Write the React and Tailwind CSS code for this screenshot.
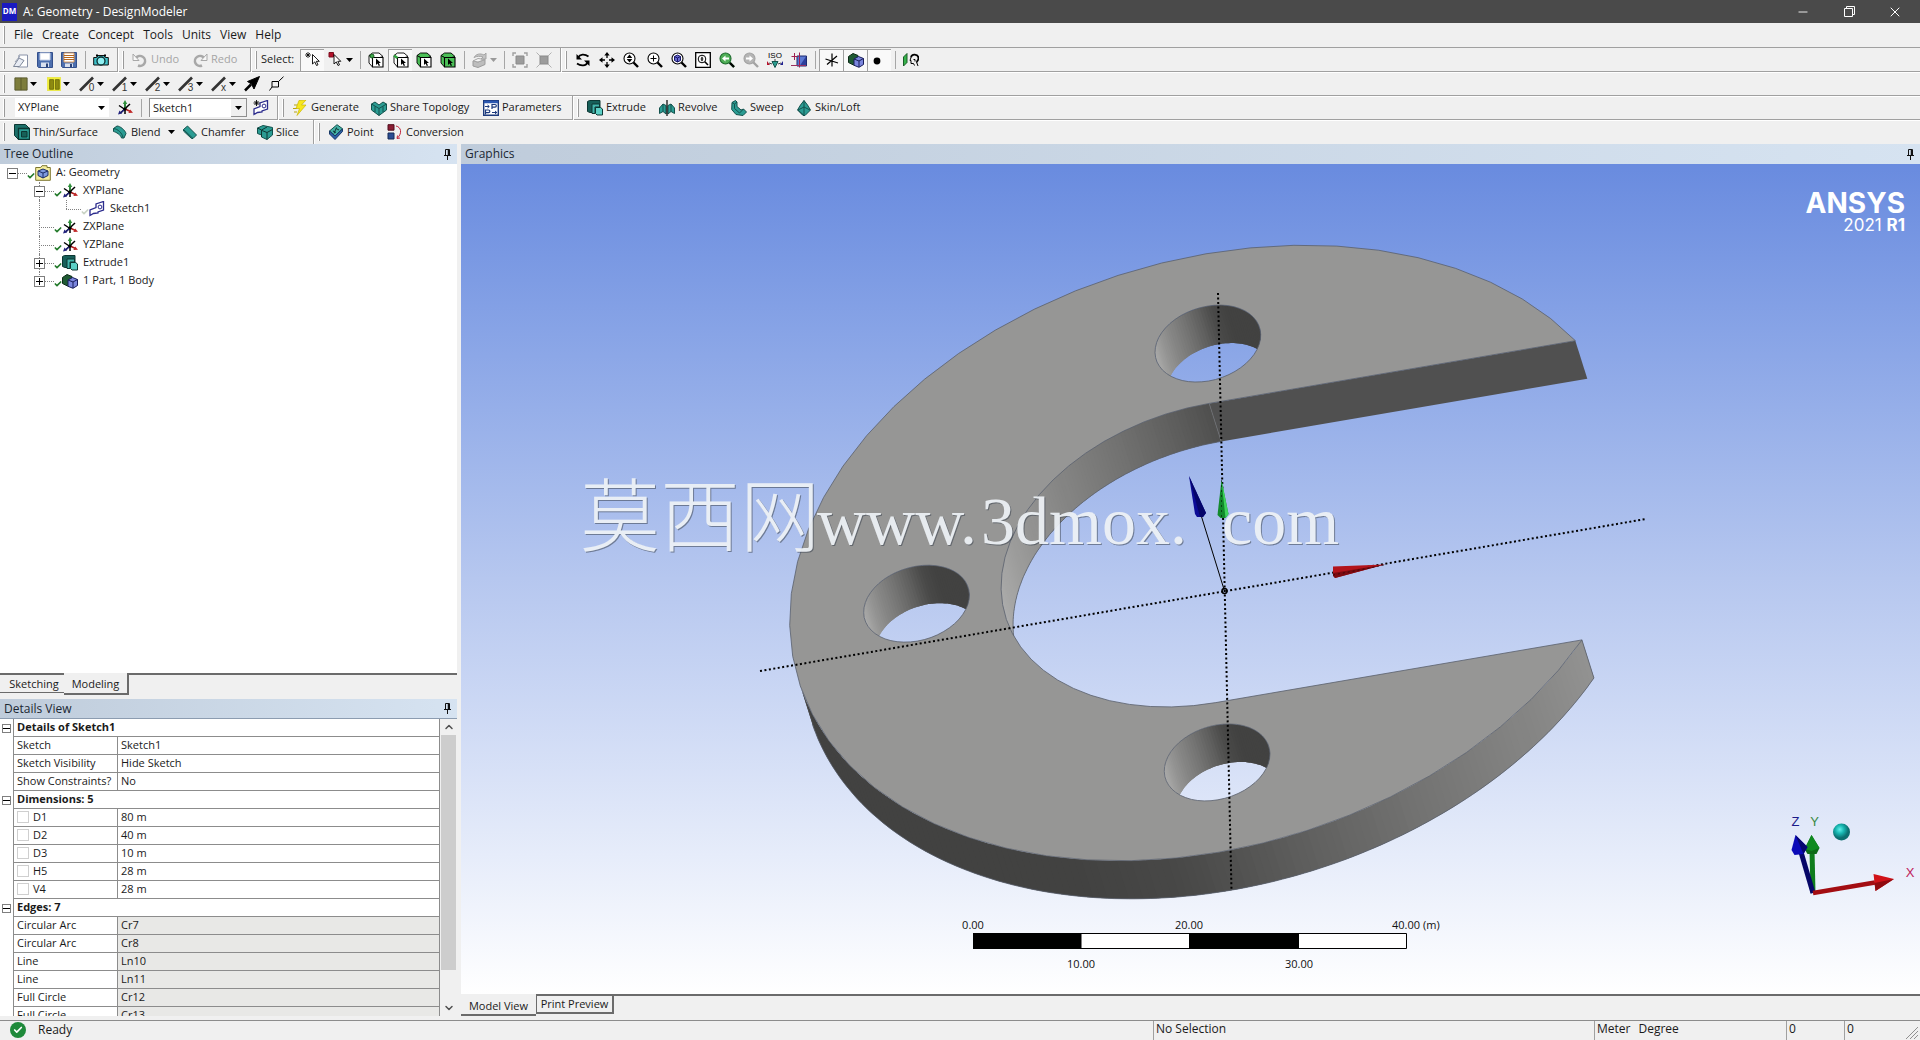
import { useState } from "react"
import { Check, ChevronDown, ChevronUp, Minus, X } from "lucide-react"

/* ---------- toolbar icons ---------- */

function Icon({ children, size = "size-4" }) {
  return (
    <svg viewBox="0 0 16 16" className={`${size} shrink-0`} fill="none" stroke="#000" strokeWidth="1" aria-hidden="true">
      {children}
    </svg>
  )
}

const NewIcon = () => (
  <Icon>
    <path d="M6 3h8.500v12h-10z" fill="#fff" stroke="#8a93a8" />
    <path d="M.5 14.500 6 6l5 2.500-4.500 6z" fill="#e8ecf4" stroke="#7d8799" />
    <path d="M2 10l5-6" stroke="#9aa3b5" />
  </Icon>
)
const SaveIcon = () => (
  <Icon>
    <path d="M.5.500h15v15h-14l-1-1z" fill="#4d6fae" stroke="#34508c" />
    <path d="M3 1h10v7H3z" fill="#fff" stroke="#c7d2e8" />
    <path d="M4 10.500h8V15H4z" fill="#d9e0ee" stroke="none" />
    <path d="M9 11.500h2V15H9z" fill="#2b4379" stroke="none" />
  </Icon>
)
const SaveAsIcon = () => (
  <Icon>
    <path d="M.5.500h15v15h-14l-1-1z" fill="#4d6fae" stroke="#34508c" />
    <path d="M3 1h10v9H3z" fill="#fff" stroke="#e0a060" />
    <path d="M3 3.500h10M3 5.500h10M3 7.500h10" stroke="#b5651d" />
    <path d="M4 11.500h8V15H4z" fill="#d9e0ee" stroke="none" />
    <path d="M9 12h2v3H9z" fill="#2b4379" stroke="none" />
  </Icon>
)
const CameraIcon = () => (
  <Icon>
    <path d="M.7 5.500h3l1-2h6.600l1 2h3v7.500H.7z" fill="#3fc1c9" stroke="#111" />
    <circle cx="8" cy="9" r="4" fill="#8ff0f2" stroke="#0a2a2c" strokeWidth="1.300" />
    <path d="M3 3.500h2M11 3.500h2" strokeWidth="2" />
  </Icon>
)
const UndoIcon = ({ flip }) => (
  <Icon>
    <g className={flip ? "[transform:scaleX(-1)] origin-center" : ""} stroke="#a8a8a8">
      <path d="M4 6a5 5 0 1 1 2 7.500" strokeWidth="2.500" />
      <path d="M1 2v6.500h6z" fill="#f8f8f8" />
    </g>
  </Icon>
)
const Pointer = ({ x = 6, y = 3 }) => (
  <path d={`M${x} ${y}v9.500l2.300-2.100 1.700 3.600 1.500-.7-1.700-3.500h3z`} fill="#fff" stroke="#000" strokeWidth=".9" />
)
const SelectIcon = () => (
  <Icon>
    <path d="M3 0v6M0 3h6M1 1l4 4M5 1 1 5" strokeWidth=".8" />
    <Pointer x={7.500} y={2.500} />
  </Icon>
)
const SelectModeIcon = () => (
  <Icon>
    <path d="M1 .500h4.500V5H1z" fill="#b3122b" stroke="#7c0d1e" />
    <Pointer x={6} y={2.500} />
  </Icon>
)
const CubeFilter = ({ front = "#fff", side = "#fff", dot, edge }) => (
  <Icon>
    <path d="M1 3.500 4.500 1H11l4 3.500-3 1H4z" fill={side} strokeWidth=".9" />
    <path d="M1 3.500v7.500l3.500 4V5.500z" fill={side} strokeWidth=".9" />
    <path d="M4.500 5.500H15v9.500H4.500z" fill={front} strokeWidth="1.100" />
    {dot && <circle cx="4" cy="4" r="2" fill="#3fae4b" stroke="#185a20" />}
    {edge && <path d="M1 3.500 4.500 6" stroke="#2fa33c" strokeWidth="2.500" />}
    <path d="M8 6.500v6.500l1.600-1.400 1.200 2.400 1.200-.5-1.200-2.400h2.200z" fill="#000" stroke="none" />
  </Icon>
)
const GreyBoxIcon = () => (
  <Icon>
    <path d="M1 9v5l5 1.500 7-3V7.500L6 10z" fill="#bdbdbd" stroke="#9b9b9b" />
    <path d="M1 9l5-2.500 7 1L6 10z" fill="#f4f4f4" stroke="#a5a5a5" />
    <path d="M2 5.500C4 2 8 1 12 3l2-2v6H9l2-2C8 4 5 4 2 5.500z" fill="#c4c4c4" stroke="#a5a5a5" />
  </Icon>
)
const ExpandIcon = ({ shrink }) => (
  <Icon>
    <path d="M4 4h8v8H4z" fill="#9c9c9c" stroke="#8a8a8a" />
    {shrink ? (
      <path d="M.5.500 4 4M15.500.500 12 4M.5 15.500 4 12M15.500 15.500 12 12" stroke="#b2b2b2" />
    ) : (
      <path d="M1 4V1h3M12 1h3v3M15 12v3h-3M4 15H1v-3" stroke="#a0a0a0" strokeWidth="1.400" />
    )}
  </Icon>
)
const RotateIcon = () => (
  <Icon>
    <path d="M3 5.500C5 2 9.500 1.500 13.500 4.500M13 10c-2 4-7 4.500-11 1.500" strokeWidth="1.700" />
    <path d="M1.500 2v5.500h5.500zM14.500 14V8.500H9z" fill="#000" stroke="none" />
  </Icon>
)
const PanIcon = () => (
  <Icon>
    <path d="M8 2v4M8 10v4M2 8h4M10 8h4" strokeWidth="1.300" />
    <path d="M8 0l2.700 3.500H5.300zM8 16l2.700-3.500H5.300zM0 8l3.500-2.700v5.400zM16 8l-3.500-2.700v5.400z" fill="#000" stroke="none" />
  </Icon>
)
const Lens = ({ c = "#000", fill = "#fff", children }) => (
  <Icon>
    <path d="M10.500 10.500 15 15" stroke={c} strokeWidth="2.400" />
    <circle cx="6.500" cy="6.500" r="5.500" fill={fill} stroke={c} strokeWidth="1.100" />
    {children}
  </Icon>
)
const ZoomIcon = () => (
  <Lens><path d="M6.500 2.500 9.300 6H3.700zM6.500 10.500 9.300 7H3.700z" fill="#000" stroke="none" /></Lens>
)
const ZoomInIcon = () => <Lens><path d="M6.500 3.500v6M3.500 6.500h6" /></Lens>
const ZoomBodyIcon = () => (
  <Lens>
    <path d="M6.500 3 9.500 4.500v4l-3 1.500-3-1.500v-4z" fill="#6a6ad0" stroke="#17176b" />
    <path d="M3.500 4.500l3 1.500 3-1.500M6.500 6v4" stroke="#17176b" />
  </Lens>
)
const ZoomFitIcon = () => (
  <Icon>
    <path d="M.7.700h14.600v14.600H.7z" fill="#fff" strokeWidth="1.300" />
    <circle cx="7" cy="7" r="3.800" />
    <path d="M7 4.500 8.500 6.700h-3zM7 9.500 8.500 7.300h-3z" fill="#000" stroke="none" />
    <path d="M9.800 9.800l3.200 3.200" strokeWidth="1.600" />
  </Icon>
)
const ZoomPrevIcon = () => (
  <Lens c="#1d6a2d" fill="#4fae56">
    <path d="M3 6.500l3.500-3V5.500H10v2H6.500v2z" fill="#fff" stroke="none" />
    <path d="M11 11l4 4" stroke="#000" strokeWidth="2.200" />
  </Lens>
)
const ZoomNextIcon = () => (
  <Lens c="#a3a3a3" fill="#b5b5b5"><path d="M10 6.500 6.500 3.500V5.500H3v2h3.500v2z" fill="#fff" stroke="none" /></Lens>
)
const IsoIcon = () => (
  <Icon>
    <text x="8" y="5.500" textAnchor="middle" fontSize="8" fontFamily="Liberation Sans, sans-serif" fill="#000" stroke="none">ISO</text>
    <path d="M8 7v3M2 11l3 1M14 11l-3 1" stroke="#444" />
    <path d="M5 9.500h6l-3 6z" fill="#2a9d8f" stroke="#14534c" />
    <path d="M0 9v4h3z" fill="#b3122b" stroke="none" /><path d="M16 9v4h-3z" fill="#22228f" stroke="none" />
  </Icon>
)
const LookAtIcon = () => (
  <Icon>
    <path d="M6 4h9.500v10H6z" fill="#5b78d2" stroke="#1c2a70" />
    <path d="M9 13.500l6-9v9z" fill="#2c3f9c" stroke="none" />
    <path d="M3.500 1v7M.5 4.500H7M8.500.500v15" stroke="#a02050" />
    <path d="M0 13.500h15" stroke="#9a3060" />
  </Icon>
)
const AxisToggleIcon = () => (
  <Icon>
    <path d="M8 1.500v13M1.500 7l12.500 4M13 4 3 12.500" strokeWidth="1.200" />
  </Icon>
)
const BodyIcon = ({ size }) => (
  <Icon size={size}>
    <path d="M.5 4.500 5 1.500l5 2v6L5.500 13l-5-2.500z" fill="#1f5a33" stroke="#0c2b17" />
    <path d="M6 7l4.500-2.500 5 2v6L11 15.300l-5-2z" fill="#7b86dd" stroke="#181d5a" />
    <path d="M6 7l5 2 4.500-2.500M11 9v6" stroke="#181d5a" />
  </Icon>
)
const DotIcon = () => <Icon><circle cx="5" cy="9" r="3.400" fill="#000" stroke="none" /></Icon>
const HeadIcon = () => (
  <Icon>
    <path d="M.5 5l3.500-3.500v9L.5 14z" fill="#35b24a" stroke="#1a5d27" />
    <path d="M8 5.500C8.500 1.500 15 1.500 15.500 6c.1 2-1 3-2 4" strokeWidth="1.800" />
    <path d="M8 5.500l-1 3h1v3h2.500l1 2M10.500 7.500h1.500v2M13.500 10l1.500 4" strokeWidth="1" />
  </Icon>
)

const PlaneOliveIcon = () => (
  <Icon size="size-[14px]">
    <path d="M1 1h14v14H1z" fill="#7d7d3c" stroke="#55552a" /><path d="M8 1v14" stroke="#55552a" />
  </Icon>
)
const PlaneYellowIcon = () => (
  <Icon size="size-[14px]">
    <path d="M0 0h16v16H0z" fill="#f1ee3a" stroke="#e3e36a" />
    <path d="M3 3h4.500v11H3zM9.500 3H14v11H9.500z" fill="#8d8a10" stroke="#6c6a0c" />
  </Icon>
)
const LineWidthIcon = ({ mark }) => (
  <Icon>
    <path d="M1 14.500 14 1.500" stroke="#333" strokeWidth="2.600" />
    <text x="12.500" y="15" textAnchor="middle" fontSize="10" fontFamily="Liberation Sans, sans-serif" fill="#333" stroke="none">{mark}</text>
  </Icon>
)
const ArrowBlackIcon = () => (
  <Icon><path d="M1 14.500 7 8.500" strokeWidth="2.500" /><path d="M15.500.500 3.500 5.500l4 2.500 2.500 5z" fill="#000" /></Icon>
)
const SquareLineIcon = () => (
  <Icon><path d="M1.500 14.500 4 11M4 5.500h6.500V11H4zM10.500 5.500 15.500.700" /></Icon>
)

const PlaneIcon = ({ size }) => (
  <Icon size={size}>
    <path d="M8 2.500V14M2 5.500l6 4M13 4 3.500 13" strokeWidth="1.500" />
    <path d="M8 9V2.500" stroke="#2f8f3b" strokeWidth="1.800" />
    <path d="M8 0l2.200 4H5.800z" fill="#2f8f3b" stroke="none" />
    <path d="M8 9l5 2.300" stroke="#b02020" strokeWidth="1.500" />
    <path d="M16 12.700l-4.600.3 1.800-3.500z" fill="#c02626" stroke="none" />
    <path d="M8 9l-4.500 4" stroke="#22227d" strokeWidth="1.500" />
    <path d="M1 14.500l1.500-4 2.500 3z" fill="#22227d" stroke="none" />
    <circle cx="8" cy="9" r="1.200" fill="#000" />
  </Icon>
)
const SketchIcon = ({ star }) => (
  <Icon>
    <path d="M1 14.500V9l6-2.500V3l7.500-2.500v8.500L9 11v1l-4.500.500z" fill="#fff" stroke="#2a2a8c" strokeWidth="1.300" />
    <circle cx="11" cy="6" r="1.900" stroke="#2a2a8c" />
    {star && <path d="M3.500 0v6M.5 3h6M1.500 1l4 4M5.500 1l-4 4" strokeWidth=".9" />}
  </Icon>
)
const GenerateIcon = () => (
  <Icon>
    <path d="M7 .500 14 0 9.500 5H14L5 15.500l2.500-7H4z" fill="#f7e71c" stroke="#c9b400" strokeWidth=".7" />
    <path d="M2 5h3M1 8.500h3.500M2 12h3" stroke="#b8a50c" />
  </Icon>
)
const TEAL = "#2b9c93"
const DARK_TEAL = "#12514c"
const ShareIcon = () => (
  <Icon>
    <path d="M.5 4 4 2l4 3 4-3 3.500 2v6L8 15.500.500 10z" fill={TEAL} stroke={DARK_TEAL} />
    <path d="M.5 4 8 8.500 15.500 4M8 8.500v7M4 6.500V12M12 6.500V12" stroke={DARK_TEAL} />
  </Icon>
)
const ParametersIcon = () => (
  <Icon>
    <path d="M.7.700h14.600v14.600H.7z" fill="#fff" stroke="#1c3a7d" strokeWidth="1.400" />
    <path d="M1 2h14" stroke="#2b57b0" strokeWidth="2.500" />
    <path d="M2 6.500h4M9 12.500h5M4.500 5l1.800 1.500L4.500 8M12 11l1.800 1.500L12 14" stroke="#1c3a7d" />
    <path d="M9 9V4.500h3a1.300 1.300 0 0 1 0 2.700H9M2.500 14.500V10h3a1.300 1.300 0 0 1 0 2.700h-3" stroke="#1c3a7d" strokeWidth="1.200" />
  </Icon>
)
const ExtrudeIcon = ({ size }) => (
  <Icon size={size}>
    <path d="M.5 1.500 2.500.500h10.500v10L11 12.500H3l-2.500-1z" fill="#175f59" stroke="#0c3733" />
    <path d="M5 4h7.500v3H8v6.500H5z" fill="#43b5ac" stroke="#0c3733" />
    <path d="M8.500 7.500h5l2 1.500v6H10l-1.500-1.500z" fill="#5cd0c6" stroke="#0c3733" />
  </Icon>
)
const RevolveIcon = () => (
  <Icon>
    <path d="M.5 13.500V8L4 4l3 1.500V14L4 11.500zM15.500 13.500V8L12 4 9 5.500V14l3-2.500z" fill={TEAL} stroke={DARK_TEAL} />
    <path d="M8 0v16" strokeWidth="1.200" /><path d="M4 4v7.500M12 4v7.500" stroke={DARK_TEAL} />
  </Icon>
)
const SweepIcon = () => (
  <Icon>
    <path d="M1 2.500 4.500.500 6 2v4.500l4 3.500 2.500-1 3 3L12 15.500 5 14.500.700 9.500z" fill={TEAL} stroke={DARK_TEAL} />
    <path d="M1 2.500 3.500 4 6 2M3.500 4v4.500l5 4.500 4-4" stroke={DARK_TEAL} />
  </Icon>
)
const SkinIcon = () => (
  <Icon>
    <path d="M8 .500 11.500 5l3 5L9 15.500H7L1.500 10l3-5z" fill={TEAL} stroke={DARK_TEAL} />
    <path d="M8 .500v15L2 10l6-3 6 3" stroke={DARK_TEAL} />
  </Icon>
)
const ThinIcon = () => (
  <Icon>
    <path d="M.5.500h11l4 4v11h-11l-4-4z" fill="#1c6f69" stroke="#0c3733" />
    <path d="M4.500 4.500h11v11h-11z" fill={TEAL} stroke="#0c3733" strokeWidth="1.300" />
    <path d="M7.500 7.500h5.500v5.500H7.500z" fill="#176058" stroke="#0c3733" />
  </Icon>
)
const BlendIcon = () => (
  <Icon>
    <path d="M1.500 4.500 5 2c3 0 8 4 9 7.500l-2 4.500H9.500C9 11 4 8 1.500 7.500z" fill={TEAL} stroke={DARK_TEAL} />
    <path d="M1.500 4.500C6 5 10 9 11 13.500" stroke={DARK_TEAL} />
  </Icon>
)
const ChamferIcon = () => (
  <Icon>
    <path d="M1.500 5.500 5.500 2l9 9-3.500 3.500H9.500L1.500 7z" fill={TEAL} stroke={DARK_TEAL} />
    <path d="M1.500 5.500 11 14.500" stroke={DARK_TEAL} />
  </Icon>
)
const SliceIcon = () => (
  <Icon>
    <path d="M.5 4 6 1.500l9.500 2V11L10 15.500 4.500 13V11L.500 9.500z" fill={TEAL} stroke={DARK_TEAL} />
    <path d="M.5 4l4 2 5.500-3M4.500 6v7M5 6.500l5 2 5.500-3M10 8.500v7" stroke="#0c3733" />
  </Icon>
)
const PointIcon = () => (
  <Icon>
    <path d="M1.500 7 9 .700l5.500 4L7 12z" fill="#44b0a6" stroke={DARK_TEAL} />
    <path d="M1.500 7v3L7 15.500l7.500-8V5L7 12z" fill="#2d62a8" stroke="#173766" />
    <path d="M5 7l3 1.500M8 4.500l3 1.500M8.500 3.500 6 9.500" stroke="#0c3733" />
  </Icon>
)
const ConversionIcon = () => (
  <Icon>
    <path d="M1 .700h6v5.500H1z" fill="#8c1d34" stroke="#4f0e1c" />
    <path d="M1 9h6v6H1z" fill="#2a4c93" stroke="#152a57" />
    <path d="M9 2c5 1 6.500 7 1.500 12M10 14.500l.5-3M10 14.500l3-.5" stroke="#c0243b" />
  </Icon>
)
const FolderBodyIcon = () => (
  <Icon>
    <path d="M.7 2.500h5L7 .700h5v1.800h3.300v12.800H.7z" fill="#f5ee9e" stroke="#7c7630" />
    <path d="M8 4l5 2v4.500L8 13l-5-2.500V6z" fill="#7f9be0" stroke="#1b2c66" />
    <path d="M3 6l5 2 5-2M8 8v5" stroke="#1b2c66" />
  </Icon>
)

/* ---------- toolbar parts ---------- */

const Grip = () => <span className="mx-1 h-[18px] w-px shrink-0 bg-[#9a9a9a] shadow-[-1px_0_0_#fff]" />
const Sep = () => <span className="ml-1 mr-[3px] h-[18px] w-px shrink-0 bg-[#a6a6a6]" />
const End = () => <span className="ml-1 mr-px h-6 w-px shrink-0 bg-[#a0a0a0] shadow-[1px_0_0_#fff]" />
const Caret = ({ className = "text-black" }) => (
  <svg viewBox="0 0 7 4" className={`h-1 w-[7px] shrink-0 ${className}`} fill="currentColor" aria-hidden="true">
    <path d="M0 0h7L3.500 4z" />
  </svg>
)

function ToolButton({ label, pressed, width = "w-6", children }) {
  return (
    <button
      type="button"
      aria-label={label}
      aria-pressed={pressed}
      className={`flex h-[22px] ${width} shrink-0 items-center justify-center gap-0.5 ${
        pressed ? "border-l border-t border-[#a0a0a0] bg-[#f9f9f9]" : ""
      }`}
    >
      {children}
    </button>
  )
}

function TextButton({ icon, width, disabled, caret, children }) {
  return (
    <button
      type="button"
      disabled={disabled}
      className={`flex h-[22px] ${width} shrink-0 items-center gap-[3px] whitespace-nowrap pl-1 disabled:text-[#a5a5a5]`}
    >
      {icon}
      <span>{children}</span>
      {caret && <span className="pl-1"><Caret /></span>}
    </button>
  )
}

function Combo({ label, value, options, width, boxed }) {
  const [current, setCurrent] = useState(value)
  return (
    <span className={`relative flex h-[19px] ${width} shrink-0 items-center bg-white ${boxed ? "border-l border-t border-[#8f8f8f]" : ""}`}>
      <select
        aria-label={label}
        value={current}
        onChange={(e) => setCurrent(e.target.value)}
        className="size-full appearance-none bg-transparent pl-[3px] outline-none"
      >
        {options.map((o) => <option key={o}>{o}</option>)}
      </select>
      <span className={`pointer-events-none absolute right-0 flex h-[18px] w-4 items-center justify-center ${boxed ? "border-b border-r border-[#8f8f8f] bg-[#f0f0f0]" : ""}`}>
        <Caret />
      </span>
    </span>
  )
}

function Toolbars() {
  const row = "flex h-6 items-center border-b border-[#a0a0a0] shadow-[0_1px_0_#fff]"
  return (
    <div className="bg-[#f0f0f0] text-[11px]">
      <div className={row}>
        <Grip />
        <ToolButton label="New"><NewIcon /></ToolButton>
        <ToolButton label="Save"><SaveIcon /></ToolButton>
        <ToolButton label="Save As"><SaveAsIcon /></ToolButton>
        <Sep />
        <ToolButton label="Image capture"><CameraIcon /></ToolButton>
        <End />
        <Grip />
        <TextButton icon={<UndoIcon />} width="w-[60px]" disabled>Undo</TextButton>
        <TextButton icon={<UndoIcon flip />} width="w-[58px]" disabled>Redo</TextButton>
        <End />
        <Grip />
        <span className="w-[39px] whitespace-nowrap">Select:</span>
        <ToolButton label="New selection" pressed><SelectIcon /></ToolButton>
        <ToolButton label="Select mode" width="w-8"><SelectModeIcon /><Caret /></ToolButton>
        <Sep />
        <ToolButton label="Points"><CubeFilter dot /></ToolButton>
        <ToolButton label="Edges" pressed><CubeFilter edge /></ToolButton>
        <ToolButton label="Faces"><CubeFilter side="#4bbf57" /></ToolButton>
        <ToolButton label="Bodies"><CubeFilter front="#4bbf57" side="#4bbf57" /></ToolButton>
        <Sep />
        <ToolButton label="Extend selection" width="w-8"><GreyBoxIcon /><Caret className="text-[#9a9a9a]" /></ToolButton>
        <Sep />
        <ToolButton label="Expand"><ExpandIcon /></ToolButton>
        <ToolButton label="Shrink"><ExpandIcon shrink /></ToolButton>
        <End />
        <Grip />
        <ToolButton label="Rotate"><RotateIcon /></ToolButton>
        <ToolButton label="Pan"><PanIcon /></ToolButton>
        <ToolButton label="Zoom"><ZoomIcon /></ToolButton>
        <ToolButton label="Box zoom"><ZoomInIcon /></ToolButton>
        <ToolButton label="Zoom to body"><ZoomBodyIcon /></ToolButton>
        <ToolButton label="Zoom to fit"><ZoomFitIcon /></ToolButton>
        <ToolButton label="Previous view"><ZoomPrevIcon /></ToolButton>
        <ToolButton label="Next view"><ZoomNextIcon /></ToolButton>
        <ToolButton label="Isometric view"><IsoIcon /></ToolButton>
        <ToolButton label="Look at plane"><LookAtIcon /></ToolButton>
        <Sep />
        <ToolButton label="Display plane" pressed><AxisToggleIcon /></ToolButton>
        <ToolButton label="Display model" pressed><BodyIcon /></ToolButton>
        <ToolButton label="Display points" pressed><DotIcon /></ToolButton>
        <Sep />
        <ToolButton label="Look at face"><HeadIcon /></ToolButton>
      </div>

      <div className={row}>
        <Grip />
        <ToolButton label="Face color" width="w-[33px]"><PlaneOliveIcon /><Caret /></ToolButton>
        <ToolButton label="Edge color" width="w-[33px]"><PlaneYellowIcon /><Caret /></ToolButton>
        {["0", "1", "2", "3", "x"].map((m) => (
          <ToolButton key={m} label={`Thickness ${m}`} width="w-[33px]"><LineWidthIcon mark={m} /><Caret /></ToolButton>
        ))}
        <ToolButton label="Edge direction"><ArrowBlackIcon /></ToolButton>
        <ToolButton label="Display vertices"><SquareLineIcon /></ToolButton>
      </div>

      <div className={row}>
        <Grip />
        <span className="w-1.5" />
        <Combo label="Plane" value="XYPlane" options={["XYPlane", "ZXPlane", "YZPlane"]} width="w-[94px]" />
        <span className="w-1" />
        <ToolButton label="New plane"><PlaneIcon /></ToolButton>
        <Sep />
        <span className="w-1" />
        <Combo label="Sketch" value="Sketch1" options={["Sketch1"]} width="w-[98px]" boxed />
        <span className="w-0.5" />
        <ToolButton label="New sketch"><SketchIcon star /></ToolButton>
        <End />
        <Grip />
        <TextButton icon={<GenerateIcon />} width="w-[79px]">Generate</TextButton>
        <TextButton icon={<ShareIcon />} width="w-[112px]">Share Topology</TextButton>
        <TextButton icon={<ParametersIcon />} width="w-[89px]">Parameters</TextButton>
        <End />
        <Grip />
        <TextButton icon={<ExtrudeIcon />} width="w-[72px]">Extrude</TextButton>
        <TextButton icon={<RevolveIcon />} width="w-[72px]">Revolve</TextButton>
        <TextButton icon={<SweepIcon />} width="w-[65px]">Sweep</TextButton>
        <TextButton icon={<SkinIcon />} width="w-20">Skin/Loft</TextButton>
      </div>

      <div className="flex h-6 items-center">
        <Grip />
        <span className="w-px" />
        <TextButton icon={<ThinIcon />} width="w-[98px]">Thin/Surface</TextButton>
        <TextButton icon={<BlendIcon />} width="w-[70px]" caret>Blend</TextButton>
        <TextButton icon={<ChamferIcon />} width="w-[75px]">Chamfer</TextButton>
        <TextButton icon={<SliceIcon />} width="w-14">Slice</TextButton>
        <End />
        <Grip />
        <TextButton icon={<PointIcon />} width="w-[59px]">Point</TextButton>
        <TextButton icon={<ConversionIcon />} width="w-[88px]">Conversion</TextButton>
      </div>
    </div>
  )
}

/* ---------- tree + details ---------- */

function PanelHeader({ title, className = "" }) {
  return (
    <header className={`flex h-5 shrink-0 items-center justify-between bg-linear-to-r from-[#bfccdb] to-[#d6e3f1] pl-1 pr-[5px] text-[#1b2733] ${className}`}>
      <h2>{title}</h2>
      <button type="button" aria-label={`Pin ${title}`}>
        <svg viewBox="0 0 9 11" className="h-[11px] w-[9px]" fill="none" stroke="#111" aria-hidden="true">
          <path d="M2.500 6.500v-6h4v6M1 6.500h7M4.500 7v4" />
          <path d="M5.500 1v5" strokeWidth="1.500" />
        </svg>
      </button>
    </header>
  )
}

function Toggle({ open, size = "size-[11px]" }) {
  return (
    <button
      type="button"
      aria-label={open ? "Collapse" : "Expand"}
      className={`relative z-10 flex ${size} shrink-0 items-center justify-center border border-[#7f7f7f] bg-white`}
    >
      <svg viewBox="0 0 7 7" className="size-[7px]" stroke="#000" aria-hidden="true">
        <path d={open ? "M0 3.500h7" : "M0 3.500h7M3.500 0v7"} />
      </svg>
    </button>
  )
}

const tree = [
  { text: "A: Geometry", level: 0, toggle: "open", icon: <FolderBodyIcon /> },
  { text: "XYPlane", level: 1, toggle: "open", icon: <PlaneIcon /> },
  { text: "Sketch1", level: 2, icon: <SketchIcon />, faded: true },
  { text: "ZXPlane", level: 1, icon: <PlaneIcon /> },
  { text: "YZPlane", level: 1, icon: <PlaneIcon /> },
  { text: "Extrude1", level: 1, toggle: "closed", icon: <ExtrudeIcon /> },
  { text: "1 Part, 1 Body", level: 1, toggle: "closed", icon: <BodyIcon />, last: true },
]

function TreeRow({ text, level, toggle, icon, faded, last }) {
  return (
    <li className="flex h-[18px] items-center">
      {level > 0 && <span className="w-[27px]" />}
      {level > 1 && <span className="h-full w-[27px] pl-3"><span className="block h-full border-l border-dotted border-[#808080]" /></span>}
      <span className="flex h-full w-[27px] items-center pl-[7px]">
        {level > 0 && (
          <span className="flex h-full w-0 justify-start pl-[5px]">
            <span className={`border-l border-dotted border-[#808080] ${last || level > 1 ? "h-1/2" : "h-full"}`} />
          </span>
        )}
        {toggle && <span className={level > 0 ? "-ml-[5px]" : ""}><Toggle open={toggle === "open"} /></span>}
        <span className="h-px flex-1 border-t border-dotted border-[#808080]" />
      </span>
      <Check className={`mt-1.5 size-2 ${faded ? "text-[#c9d3c4]" : "text-[#237a2b]"}`} strokeWidth={5} />
      {icon}
      <span className="pb-px pl-[5px]">{text}</span>
    </li>
  )
}

const details = [
  { group: "Details of Sketch1" },
  { name: "Sketch", value: "Sketch1" },
  { name: "Sketch Visibility", value: "Hide Sketch" },
  { name: "Show Constraints?", value: "No" },
  { group: "Dimensions: 5" },
  { name: "D1", value: "80 m", box: true },
  { name: "D2", value: "40 m", box: true },
  { name: "D3", value: "10 m", box: true },
  { name: "H5", value: "28 m", box: true },
  { name: "V4", value: "28 m", box: true },
  { group: "Edges: 7" },
  { name: "Circular Arc", value: "Cr7", locked: true },
  { name: "Circular Arc", value: "Cr8", locked: true },
  { name: "Line", value: "Ln10", locked: true },
  { name: "Line", value: "Ln11", locked: true },
  { name: "Full Circle", value: "Cr12", locked: true },
  { name: "Full Circle", value: "Cr13", locked: true },
]

function DetailsTable() {
  const cell = "border-b border-r border-[#8c8c8c] p-0 pb-0.5 pl-[3px] text-left align-middle whitespace-nowrap"
  return (
    <table className="w-full table-fixed border-separate border-spacing-0 text-[11px] leading-[14px]">
      <colgroup>
        <col className="w-[14px]" />
        <col className="w-[104px]" />
        <col />
      </colgroup>
      <tbody>
        {details.map((row, i) => (
          <tr key={i} className="h-[18px]">
            <td className="border-r border-[#8c8c8c] p-0 pl-0.5">{row.group && <Toggle open size="size-[9px]" />}</td>
            {row.group ? (
              <th colSpan={2} className={`${cell} font-bold`}>{row.group}</th>
            ) : (
              <>
                <td className={cell}>
                  {row.box ? (
                    <label className="flex items-center gap-1">
                      <input type="checkbox" className="size-3 appearance-none border border-[#cfcfcf] bg-white" />
                      {row.name}
                    </label>
                  ) : row.name}
                </td>
                <td className={`${cell} ${row.locked ? "bg-[#e8e8e6]" : ""}`}>{row.value}</td>
              </>
            )}
          </tr>
        ))}
      </tbody>
    </table>
  )
}

function SidePanel() {
  return (
    <aside className="flex min-h-0 flex-col border-r-4 border-[#f0f0f0] bg-[#f0f0f0]">
      <PanelHeader title="Tree Outline" />
      <ul className="min-h-0 flex-1 bg-white text-[11px]">
        {tree.map((item) => <TreeRow key={item.text} {...item} />)}
      </ul>
      <div className="flex h-[26px] shrink-0 items-start text-[11px] leading-4">
        <button type="button" className="h-5 w-16 border-b border-t-2 border-[#6b6b6b] pl-1">Sketching</button>
        <button type="button" className="h-[22px] w-[65px] border-b-2 border-r-2 border-[#6b6b6b] pt-0.5">Modeling</button>
        <span className="flex-1 border-t-2 border-[#6b6b6b]" />
      </div>
      <section className="flex h-[321px] shrink-0 flex-col pb-1">
        <PanelHeader title="Details View" className="border-b border-[#8c9cb0]" />
        <div className="flex min-h-0 flex-1 overflow-hidden">
          <div className="min-w-0 flex-1 bg-white"><DetailsTable /></div>
          <div className="flex w-[17px] flex-col items-center bg-[#f0f0f0]">
            <ChevronUp className="h-4 w-3 shrink-0 text-[#505050]" strokeWidth={3} />
            <span className="w-[15px] flex-1 bg-[#cdcdcd]" />
            <span className="h-[30px]" />
            <ChevronDown className="h-4 w-3 shrink-0 text-[#505050]" strokeWidth={3} />
          </div>
        </div>
      </section>
    </aside>
  )
}

/* ---------- 3D view ---------- */

// metres on the sketch plane -> viewport; depth pushes a point to the back face
const project = ([x, y], depth = 0) => [
  1212.5 + 10.57 * x - 0.165 * y + 12 * depth,
  553 - 1.81 * x - 7.48 * y + 38 * depth,
]
const toPath = (pts) => "M" + pts.map((p) => p.map((n) => n.toFixed(1)).join(" ")).join("L")

const arc = (cx, cy, r, from, to, steps) =>
  Array.from({ length: steps + 1 }, (_, i) => {
    const a = from + ((to - from) * i) / steps
    const t = (a * Math.PI) / 180
    return { a, p: [cx + r * Math.cos(t), cy + r * Math.sin(t)] }
  })

const SHADES = [[0, 66], [250, 66], [264, 72], [272, 82], [282, 96], [300, 118], [330, 146], [350, 164], [372, 176]]
function shade(normal) {
  const n = normal < 60 ? normal + 360 : normal
  const i = SHADES.findIndex(([a]) => a > n)
  if (i < 1) return "rgb(174,174,172)"
  const [a0, v0] = SHADES[i - 1]
  const [a1, v1] = SHADES[i]
  const v = Math.round(v0 + ((v1 - v0) * (n - a0)) / (a1 - a0))
  return `rgb(${v},${v},${v - 1})`
}

// each strip runs a little under the next one so that no seam shows
function Wall({ pts, inward }) {
  return pts.slice(1).map((q, i) => {
    const p = pts[i]
    const next = pts[Math.min(i + 2, pts.length - 1)]
    const mid = (p.a + q.a) / 2
    const fill = shade(inward ? (mid + 180) % 360 : mid)
    return (
      <path
        key={i}
        d={toPath([project(p.p), project(q.p), project(next.p), project(next.p, 1), project(q.p, 1), project(p.p, 1)]) + "Z"}
        fill={fill}
      />
    )
  })
}

const outer = arc(0, 0, 40, 30, 330, 50)
const inner = arc(0, 0, 20, 270, 90, 30)
const holes = [[0, 28], [-28, 0], [0, -28]]
const holeRings = holes.map(([x, y]) => arc(x, y, 5, 0, 360, 48))

const faceOutline = toPath([...outer, ...inner].map((v) => project(v.p))) + "Z"
const holeOutlines = holeRings.map((ring) => toPath(ring.map((v) => project(v.p))) + "Z")
const edge = { fill: "none", stroke: "#59606c", strokeWidth: 0.8 }

function Part() {
  const wallArc = arc(0, 0, 20, 90, 192, 102)
  const rimArc = arc(0, 0, 40, 192, 330, 138)
  const slot = [[0, 20], [34.64, 20]]
  return (
    <g>
      <Wall pts={rimArc} />
      <path d={toPath(rimArc.map((v) => project(v.p, 1)))} {...edge} />
      <path d={toPath([project([34.64, -20]), project([34.64, -20], 1)])} {...edge} />

      <Wall pts={wallArc} inward />
      <path d={toPath([project(slot[0]), project(slot[1]), project(slot[1], 1), project(slot[0], 1)]) + "Z"} fill="#505050" />
      <path d={toPath([project(slot[0]), project(slot[0], 1)])} stroke="#707070" strokeWidth="0.8" />
      <path d={toPath(wallArc.map((v) => project(v.p, 1)))} {...edge} />

      <path d={faceOutline + holeOutlines.join("")} fill="#969695" fillRule="evenodd" />

      {holes.map(([x, y], i) => (
        <g key={i}>
          <clipPath id={`hole-${i}`}><path d={holeOutlines[i]} /></clipPath>
          <g clipPath={`url(#hole-${i})`}><Wall pts={arc(x, y, 5, 8, 194, 62)} inward /></g>
          <path d={holeOutlines[i]} {...edge} />
        </g>
      ))}
      <path d={faceOutline} {...edge} />
    </g>
  )
}

function SketchAxes() {
  const dots = { stroke: "#000", strokeWidth: 2, strokeDasharray: "2 2.500" }
  return (
    <g>
      <path d="M760 671 1646 519" {...dots} />
      <path d="M1218 293 1231.500 891" {...dots} />
      <path d="M1224.500 591 1201 515" stroke="#000" />
      <path d="M1189 476l17 37-3 4h-6l-2-3z" fill="#0b0b96" />
      <path d="M1189 476l17 37-3 4h-3z" fill="#05056a" />
      <path d="M1221.500 480l7 34-3 4h-5l-3-3z" fill="#128a2c" />
      <path d="M1221.500 480l7 34-3 4z" fill="#3fd35c" />
      <path d="M1385 564.500l-52 2v8l2 3.500z" fill="#b3141b" />
      <path d="M1385 564.500 1333 573v3l2 2z" fill="#7d0a10" />
      <path d="M1221.500 480V518M1333 575 1385 565" stroke="#000" strokeDasharray="2 3" opacity=".5" />
      <circle cx="1224.500" cy="591" r="2.500" fill="none" stroke="#000" strokeWidth="1.500" />
    </g>
  )
}

function ScaleBar() {
  return (
    <g>
      <path d="M973.500 933.500H1406.500V948.500H973.500Z" fill="#fff" stroke="#000" />
      <path d="M973 933h108.500v16H973zM1189 933h110v16h-110z" fill="#000" />
      <g fontSize="11" textAnchor="middle" fill="#111">
        <text x="973" y="929">0.00</text>
        <text x="1189" y="929">20.00</text>
        <text x="1406" y="929">40.00</text>
        <text x="1423" y="929" textAnchor="start">(m)</text>
        <text x="1081" y="968">10.00</text>
        <text x="1299" y="968">30.00</text>
      </g>
    </g>
  )
}

function Triad() {
  return (
    <g>
      <path d="M1813 893 1812 850" stroke="#0f7d1d" strokeWidth="5" />
      <path d="M1811.500 835l8 13-3 6h-9l-3-5z" fill="#0d6a18" />
      <path d="M1811.500 835l8 13-8 3-7-2z" fill="#0f8a20" />
      <path d="M1813 893 1801 852" stroke="#070768" strokeWidth="5" />
      <path d="M1795.500 835l12 12-4 7-9 1-3-5z" fill="#0a0ab8" />
      <path d="M1795.500 835l12 12-4 7z" fill="#060670" />
      <path d="M1813 893 1875 882.500" stroke="#a30d12" strokeWidth="4.500" />
      <path d="M1894 879l-20.500-5 2 17z" fill="#d11218" />
      <path d="M1894 879l-19.500 4 1 8z" fill="#8f0a0f" />
      <circle cx="1841.500" cy="832" r="8.500" fill="url(#ball)" />
      <g fontSize="13" textAnchor="middle" fontFamily="Liberation Sans, sans-serif">
        <text x="1795.500" y="826" fill="#1b1b8a">Z</text>
        <text x="1814.500" y="826" fill="#3a8a44">Y</text>
        <text x="1910" y="877" fill="#c01a5a">X</text>
      </g>
    </g>
  )
}

function Watermark() {
  return (
    <g fill="#eef2f6" opacity=".93" className="drop-shadow-[1px_1px_0_rgba(60,68,80,0.6)]">
      <text x="580" y="545" fontSize="80" fontFamily="'Noto Sans CJK SC', sans-serif" fontWeight="300">莫西网</text>
      <text x="817" y="544" fontSize="68" fontFamily="'Liberation Serif', serif">
        www. <tspan x="981">3dmox. </tspan><tspan x="1222">com</tspan>
      </text>
    </g>
  )
}

function GraphicsPanel() {
  return (
    <main className="flex min-h-0 min-w-0 flex-col bg-[#f0f0f0]">
      <PanelHeader title="Graphics" />
      <div className="min-h-0 flex-1 bg-linear-to-b from-[#698bdf] via-[#b6c7ef] to-white">
        <svg viewBox="461 164 1459 830" className="size-full" role="img" aria-label="Model view">
          <defs>
            <radialGradient id="ball" cx=".4" cy=".35">
              <stop offset="0" stopColor="#5ff0ea" />
              <stop offset=".5" stopColor="#17b5b0" />
              <stop offset="1" stopColor="#0b6f70" />
            </radialGradient>
          </defs>
          <Part />
          <SketchAxes />
          <ScaleBar />
          <Triad />
          <g fill="#fff" textAnchor="end" fontFamily="Inter, sans-serif">
            <text x="1905" y="213" fontSize="28" fontWeight="700">ANSYS</text>
            <text x="1905" y="231" fontSize="17">2021 <tspan fontWeight="700">R1</tspan></text>
          </g>
          <Watermark />
        </svg>
      </div>
      <div className="flex h-[26px] shrink-0 items-start text-[11px] leading-4">
        <button type="button" className="h-[22px] w-[75px] border-b-2 border-[#6b6b6b] pt-1">Model View</button>
        <button type="button" className="h-5 w-[78px] border-2 border-l border-[#6b6b6b]">Print Preview</button>
        <span className="flex-1 border-t-2 border-[#6b6b6b]" />
      </div>
    </main>
  )
}

/* ---------- window ---------- */

function TitleBar() {
  return (
    <header className="flex h-[23px] shrink-0 items-center bg-[#4a4a4a] text-white">
      <span className="ml-0.5 mr-1.5 flex h-[18px] w-[15px] items-center justify-center bg-[#1a1ac0] text-[8px] font-bold">DM</span>
      <h1 className="flex-1">A: Geometry - DesignModeler</h1>
      <button type="button" aria-label="Minimize" className="flex w-[46px] justify-center"><Minus className="size-3.5" strokeWidth={1.500} /></button>
      <button type="button" aria-label="Restore" className="flex w-[46px] justify-center">
        <svg viewBox="0 0 11 11" className="size-[11px]" fill="none" stroke="currentColor" aria-hidden="true">
          <path d="M.5 2.500h8v8h-8zM2.500 2.500v-2h8v8h-2" />
        </svg>
      </button>
      <button type="button" aria-label="Close" className="flex w-[46px] justify-center"><X className="size-4" strokeWidth={1.500} /></button>
      <span className="w-0.5" />
    </header>
  )
}

const menus = ["File", "Create", "Concept", "Tools", "Units", "View", "Help"]

export default function App() {
  return (
    <div className="flex h-screen flex-col overflow-hidden bg-[#f0f0f0] font-['Open_Sans','Noto_Sans',sans-serif] text-xs text-[#1a1a1a]">
      <TitleBar />
      <nav className="flex h-[25px] shrink-0 items-center border-b border-[#a0a0a0] shadow-[0_1px_0_#fff]">
        <Grip />
        <span className="flex gap-[9px] pl-[5px]">
          {menus.map((m) => <button type="button" key={m}>{m}</button>)}
        </span>
      </nav>
      <Toolbars />
      <div className="grid min-h-0 flex-1 grid-cols-[461px_minmax(0,1fr)] grid-rows-[minmax(0,1fr)]">
        <SidePanel />
        <GraphicsPanel />
      </div>
      <footer className="flex h-5 shrink-0 items-center border-t border-[#8c8c8c]">
        <span className="flex flex-1 items-center gap-3 pb-0.5 pl-2.5">
          <span className="flex size-4 items-center justify-center rounded-full bg-[#1f8a3b] text-white"><Check className="size-2.5" strokeWidth={4} /></span>
          Ready
        </span>
        <span className="h-full w-[441px] border-l border-[#a0a0a0] pl-0.5">No Selection</span>
        <span className="flex h-full w-[192px] gap-2 border-l border-[#a0a0a0] pl-0.5"><span>Meter</span><span>Degree</span></span>
        <span className="h-full w-[58px] border-l border-[#a0a0a0] pl-0.5">0</span>
        <span className="h-full w-[54px] border-l border-[#a0a0a0] pl-0.5">0</span>
        <svg viewBox="0 0 22 14" className="mt-1 h-3.5 w-[22px]" stroke="#909090" aria-hidden="true">
          <path d="M8 13 20 1M12 13l8-8M16 13l4-4" />
        </svg>
      </footer>
    </div>
  )
}
